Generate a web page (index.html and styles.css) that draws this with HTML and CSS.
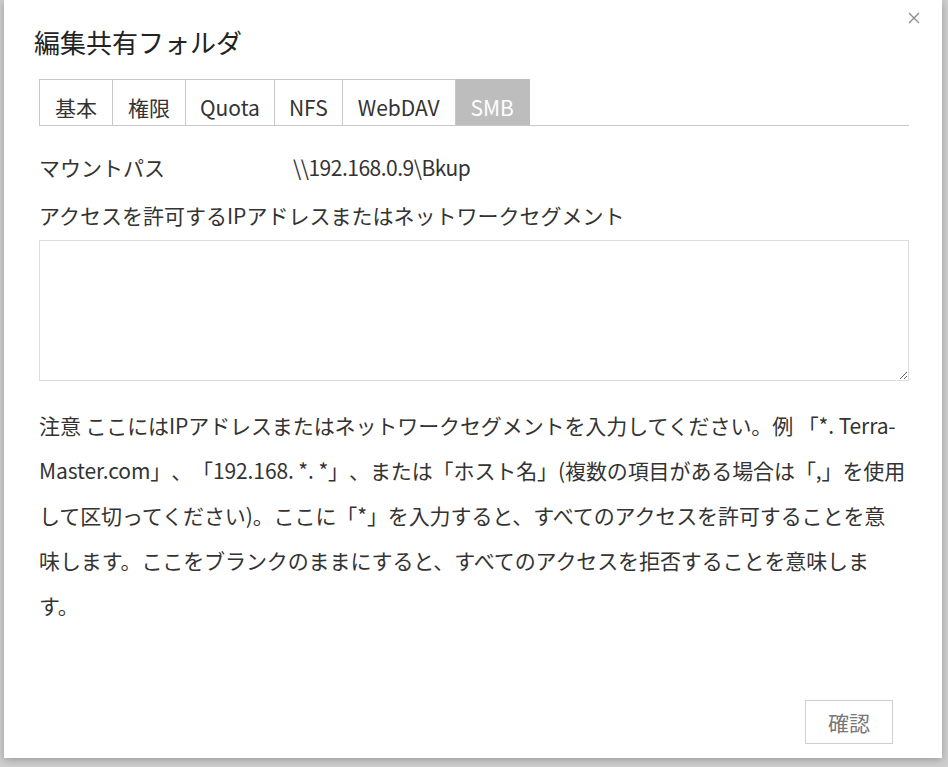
FILE: index.html
```html
<!DOCTYPE html>
<html lang="ja">
<head>
  <meta charset="UTF-8">
  <title>編集共有フォルダ</title>
  <link rel="stylesheet" href="styles.css">
</head>
<body>

<div class="dialog">
  <a href="#" class="close" title="閉じる">
    <svg width="12" height="12" viewBox="0 0 12 12"><path d="M1 1L11 11M11 1L1 11" stroke="#8a8a8a" stroke-width="1.3" fill="none"/></svg>
  </a>

  <h1 class="title">編集共有フォルダ</h1>

  <!-- tabs -->
  <div class="tabs">
    <div class="tab">基本</div>
    <div class="tab">権限</div>
    <div class="tab latin">Quota</div>
    <div class="tab latin">NFS</div>
    <div class="tab">WebDAV</div>
    <div class="tab active">SMB</div>
  </div>

  <div class="row">
    <span class="label">マウントパス</span>
    <span class="value">\\192.168.0.9\Bkup</span>
  </div>

  <div class="field-label">アクセスを許可するIPアドレスまたはネットワークセグメント</div>
  <textarea class="ip-list"></textarea>

  <p class="note">注意 ここにはIPアドレスまたはネットワークセグメントを入力してください。例 「*. Terra-Master.com」、「192.168. *. *」、または「ホスト名」(複数の項目がある場合は「,」を使用<br>して区切ってください)。ここに「*」を入力すると、すべてのアクセスを許可することを意<br>味します。ここをブランクのままにすると、すべてのアクセスを拒否することを意味しま<br>す。</p>

  <div class="footer">
    <button class="btn">確認</button>
  </div>
</div>

</body>
</html>
```

FILE: styles.css
```css
body {
  margin: 0;
  background: #cfcfcf;
  font-family: "Noto Sans CJK JP", "Noto Sans", sans-serif;
  color: #333;
  padding: 0 6px 9px 4px;
  text-spacing-trim: space-all;
}
.dialog {
  position: relative;
  background: #fff;
  height: 758px;
  box-sizing: border-box;
  padding: 24px 33px 14px 35px;
  display: flex;
  flex-direction: column;
  box-shadow: 0 2px 8px rgba(0, 0, 0, 0.25);
}
.close {
  position: absolute;
  top: 12px;
  right: 22px;
  line-height: 0;
}
.title {
  margin: 0 0 19px -5px;
  font-size: 26px;
  line-height: 36px;
  font-weight: normal;
  color: #222;
}
.tabs {
  display: flex;
  border-bottom: 1px solid #c8c8c8;
}
.tab {
  font-size: 21px;
  line-height: 30px;
  padding: 12px 15px 3px;
  border-top: 1px solid #c8c8c8;
  border-right: 1px solid #c8c8c8;
  color: #333;
}
.tab.latin {
  padding: 12px 14px 3px;
}
.tab:first-child {
  border-left: 1px solid #c8c8c8;
}
.tab.active {
  background: #bdbdbd;
  border-color: #bdbdbd;
  color: #fff;
}
.row {
  display: flex;
  margin-top: 26px;
  font-size: 21px;
  line-height: 30px;
}
.row .label {
  width: 254px;
}
.row .value {
  letter-spacing: -0.5px;
}
.field-label {
  margin-top: 18px;
  font-size: 21px;
  line-height: 30px;
}
.ip-list {
  margin-top: 10px;
  height: 141px;
  width: 100%;
  box-sizing: border-box;
  border: 1px solid #dcdcdc;
  font-family: inherit;
  font-size: 18px;
  padding: 6px;
  display: block;
}
.note {
  margin: 22px 0 0;
  font-size: 21px;
  line-height: 45px;
  letter-spacing: -0.1px;
  word-break: break-all;
}
.footer {
  margin-top: auto;
  display: flex;
  justify-content: flex-end;
  padding-right: 16px;
}
.btn {
  width: 88px;
  height: 44px;
  background: #fff;
  border: 1px solid #cfcfcf;
  color: #777;
  font-family: inherit;
  font-size: 21px;
  padding: 0;
}
```
